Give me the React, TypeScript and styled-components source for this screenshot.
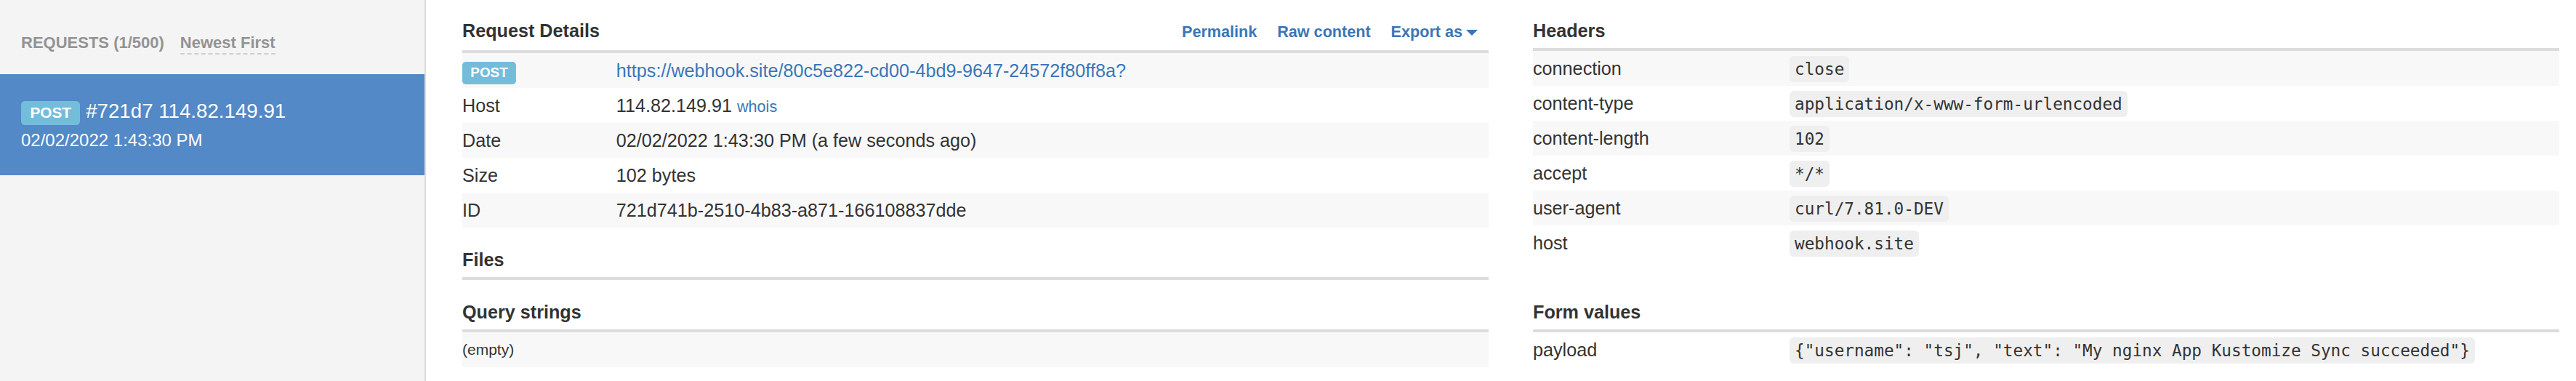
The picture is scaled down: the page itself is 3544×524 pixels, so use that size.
import React from 'react';
import styled, { createGlobalStyle } from 'styled-components';

const GlobalStyle = createGlobalStyle`
  * { box-sizing: border-box; }
  html, body, #root { height: 100%; }
  body {
    margin: 0;
    background: #fff;
    color: #333;
    font-family: 'Liberation Sans', Arial, Helvetica, sans-serif;
    font-size: 25.2px;
    line-height: 1.42857;
  }
`;

const Layout = styled.div`
  display: flex;
  min-height: 100vh;
`;

const Sidebar = styled.aside`
  flex: 0 0 586px;
  background: #f4f4f4;
  border-right: 2px solid #dcdcdc;
  padding-top: 44px;
`;

const SidebarHeader = styled.div`
  padding: 0 29px;
  font-size: 22px;
  font-weight: bold;
  line-height: 30.9px;
  color: #939393;
  white-space: nowrap;
`;

const SortToggle = styled.span`
  margin-left: 22px;
  padding-bottom: 2px;
  border-bottom: 2px dashed #cfcfcf;
  cursor: pointer;
`;

const RequestItem = styled.div<{ $active?: boolean }>`
  margin-top: 27px;
  padding: 31px 29px;
  background: ${({ $active }) => ($active ? '#5289c6' : 'transparent')};
  color: ${({ $active }) => ($active ? '#fff' : '#333')};
`;

const ItemTitle = styled.div`
  font-size: 27.7px;
  line-height: 40px;
  white-space: nowrap;
`;

const ItemDate = styled.div`
  margin-top: 3px;
  font-size: 24px;
  line-height: 34px;
`;

const Badge = styled.span`
  display: inline;
  padding: 0.2em 0.6em 0.3em;
  font-size: 75%;
  font-weight: bold;
  line-height: 1;
  color: #fff;
  background: #74bdda;
  border-radius: 0.25em;
  vertical-align: baseline;
`;

const Main = styled.main`
  flex: 1;
  display: grid;
  grid-template-columns: 1fr 1fr;
  column-gap: 61px;
  align-content: start;
  padding: 28px 23px 0 50px;
`;

const Column = styled.div`
  min-width: 0;
`;

const Section = styled.section<{ $spaced?: boolean }>`
  margin-top: ${({ $spaced }) => ($spaced ? '30px' : '0')};
`;

const SectionHeader = styled.div`
  display: flex;
  align-items: baseline;
  justify-content: space-between;
  padding-bottom: 10px;
  border-bottom: 4px solid #dcdcdc;
`;

const SectionTitle = styled.h3`
  margin: 0;
  font-size: 25.2px;
  font-weight: bold;
  line-height: 28px;
  color: #333;
`;

const Actions = styled.div`
  display: flex;
  gap: 28px;
  padding-right: 15px;
  font-size: 21.6px;
  font-weight: bold;
  line-height: 30px;
`;

const Link = styled.a`
  color: #3a76b7;
  text-decoration: none;
  cursor: pointer;
`;

const SmallLink = styled(Link)`
  font-size: 21.6px;
`;

const Caret = styled.span`
  display: inline-block;
  margin-left: 5px;
  border-top: 8px solid;
  border-left: 8px solid transparent;
  border-right: 8px solid transparent;
  vertical-align: middle;
`;

const Table = styled.table<{ $striped?: boolean }>`
  width: 100%;
  border-collapse: collapse;

  tr {
    height: 48px;
  }

  ${({ $striped }) =>
    $striped &&
    `
    tr:nth-child(odd) {
      background: #f8f8f8;
    }
  `}
`;

const LabelCell = styled.td<{ $width: string }>`
  width: ${({ $width }) => $width};
  padding: 0;
  vertical-align: middle;
  white-space: nowrap;
`;

const ValueCell = styled.td`
  padding: 0;
  vertical-align: middle;
  white-space: nowrap;
`;

const EmptyCell = styled.td`
  padding: 0;
  font-size: 21px;
  vertical-align: middle;
`;

const Code = styled.code`
  display: inline-block;
  padding: 5px 7px;
  font-family: 'DejaVu Sans Mono', 'Liberation Mono', monospace;
  font-size: 22.7px;
  line-height: 26px;
  color: #333;
  background: #efefef;
  border-radius: 6px;
  vertical-align: middle;
`;

const HEADERS: [string, string][] = [
  ['connection', 'close'],
  ['content-type', 'application/x-www-form-urlencoded'],
  ['content-length', '102'],
  ['accept', '*/*'],
  ['user-agent', 'curl/7.81.0-DEV'],
  ['host', 'webhook.site'],
];

const FORM_VALUES: [string, string][] = [
  ['payload', '{"username": "tsj", "text": "My nginx App Kustomize Sync succeeded"}'],
];

const DETAILS: { label: React.ReactNode; value: React.ReactNode }[] = [
  {
    label: <Badge>POST</Badge>,
    value: <Link>https://webhook.site/80c5e822-cd00-4bd9-9647-24572f80ff8a?</Link>,
  },
  {
    label: 'Host',
    value: (
      <>
        114.82.149.91 <SmallLink>whois</SmallLink>
      </>
    ),
  },
  { label: 'Date', value: '02/02/2022 1:43:30 PM (a few seconds ago)' },
  { label: 'Size', value: '102 bytes' },
  { label: 'ID', value: '721d741b-2510-4b83-a871-166108837dde' },
];

const KeyValueTable: React.FC<{ rows: [string, string][]; striped?: boolean }> = ({
  rows,
  striped,
}) => (
  <Table $striped={striped}>
    <tbody>
      {rows.map(([key, value]) => (
        <tr key={key}>
          <LabelCell $width="25%">{key}</LabelCell>
          <ValueCell>
            <Code>{value}</Code>
          </ValueCell>
        </tr>
      ))}
    </tbody>
  </Table>
);

const App: React.FC = () => (
  <>
    <GlobalStyle />
    <Layout>
      <Sidebar>
        <SidebarHeader>
          <span>REQUESTS (1/500)</span>
          <SortToggle>Newest First</SortToggle>
        </SidebarHeader>
        <RequestItem $active>
          <ItemTitle>
            <Badge>POST</Badge> #721d7 114.82.149.91
          </ItemTitle>
          <ItemDate>02/02/2022 1:43:30 PM</ItemDate>
        </RequestItem>
      </Sidebar>

      <Main>
        <Column>
          <Section>
            <SectionHeader>
              <SectionTitle>Request Details</SectionTitle>
              <Actions>
                <Link>Permalink</Link>
                <Link>Raw content</Link>
                <Link>
                  Export as
                  <Caret />
                </Link>
              </Actions>
            </SectionHeader>
            <Table $striped>
              <tbody>
                {DETAILS.map((row, i) => (
                  <tr key={i}>
                    <LabelCell $width="15%">{row.label}</LabelCell>
                    <ValueCell>{row.value}</ValueCell>
                  </tr>
                ))}
              </tbody>
            </Table>
          </Section>
          <Section $spaced>
            <SectionHeader>
              <SectionTitle>Files</SectionTitle>
            </SectionHeader>
          </Section>
        </Column>

        <Column>
          <Section>
            <SectionHeader>
              <SectionTitle>Headers</SectionTitle>
            </SectionHeader>
            <KeyValueTable rows={HEADERS} striped />
          </Section>
        </Column>

        <Column>
          <Section $spaced>
            <SectionHeader>
              <SectionTitle>Query strings</SectionTitle>
            </SectionHeader>
            <Table $striped>
              <tbody>
                <tr>
                  <EmptyCell>(empty)</EmptyCell>
                </tr>
              </tbody>
            </Table>
          </Section>
        </Column>

        <Column>
          <Section $spaced>
            <SectionHeader>
              <SectionTitle>Form values</SectionTitle>
            </SectionHeader>
            <KeyValueTable rows={FORM_VALUES} />
          </Section>
        </Column>
      </Main>
    </Layout>
  </>
);

export default App;
